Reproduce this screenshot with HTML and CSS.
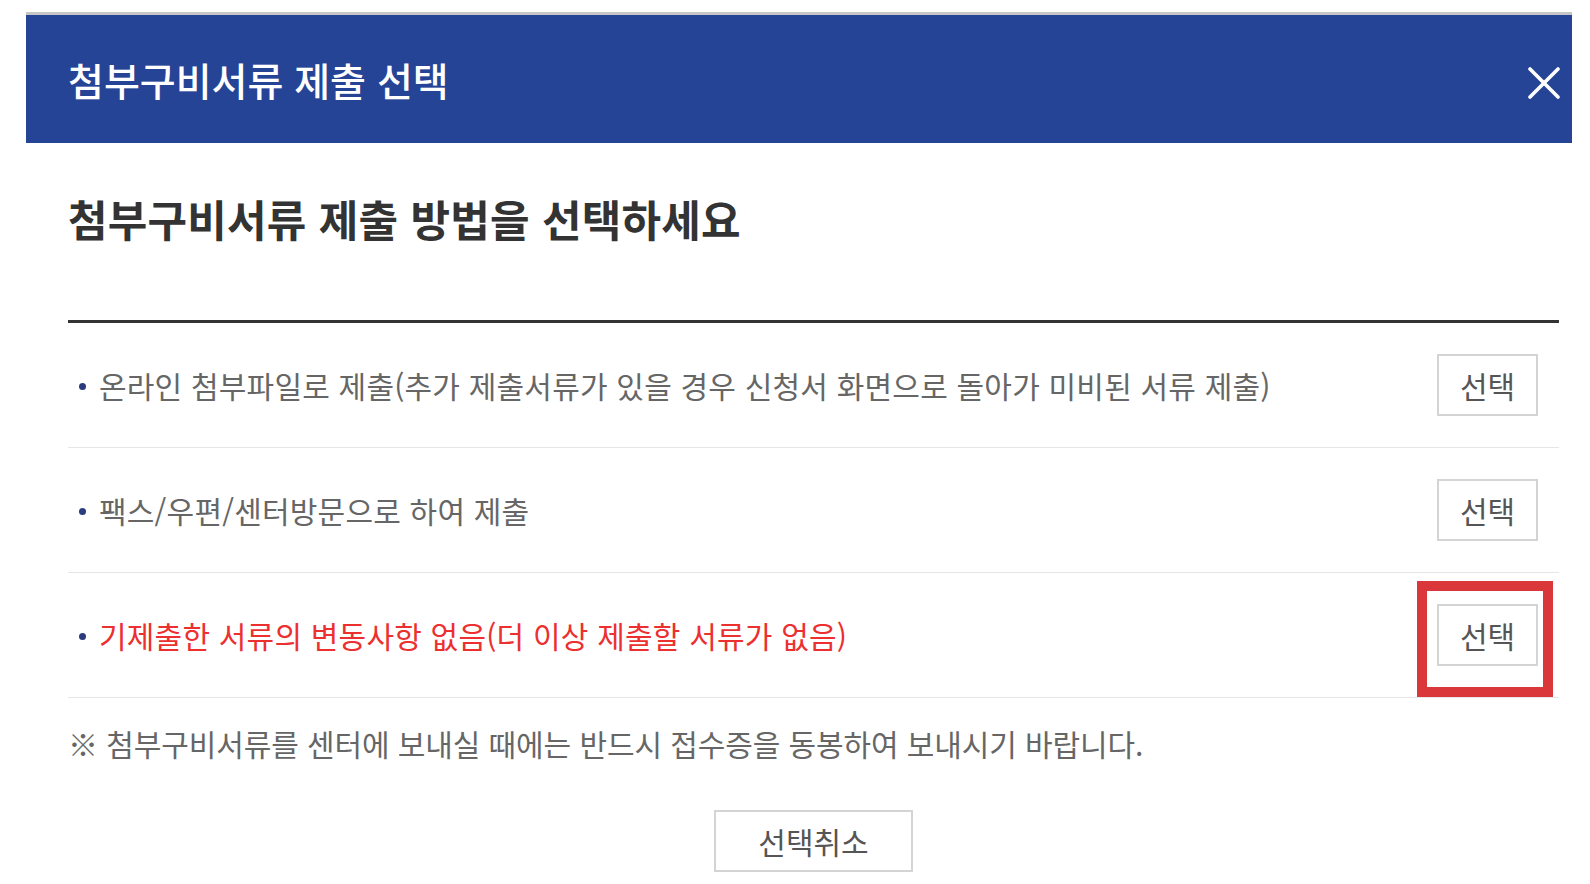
FILE: index.html
```html
<!DOCTYPE html>
<html lang="ko">
<head>
  <meta charset="UTF-8" />
  <meta name="viewport" content="width=device-width, initial-scale=1.0"/>
  <title>첨부구비서류 제출 선택</title>
  <link rel="stylesheet" href="styles.css">
</head>
<body>

  <div class="popup">
    <div class="popup-head">
      <h1>첨부구비서류 제출 선택</h1>
      <button class="close" type="button" aria-label="닫기">
        <svg width="32" height="32" viewBox="0 0 32 32">
          <path d="M2 2 L30 30 M30 2 L2 30" stroke="#fff" stroke-width="3.6" stroke-linecap="round" fill="none"/>
        </svg>
      </button>
    </div>

    <div class="popup-body">
      <h2>첨부구비서류 제출 방법을 선택하세요</h2>

      <ul class="method-list">
        <li class="method">
          <span class="label">온라인 첨부파일로 제출(추가 제출서류가 있을 경우 신청서 화면으로 돌아가 미비된 서류 제출)</span>
          <span class="btn-wrap"><button class="btn" type="button">선택</button></span>
        </li>
        <li class="method">
          <span class="label">팩스/우편/센터방문으로 하여 제출</span>
          <span class="btn-wrap"><button class="btn" type="button">선택</button></span>
        </li>
        <li class="method">
          <span class="label red">기제출한 서류의 변동사항 없음(더 이상 제출할 서류가 없음)</span>
          <span class="btn-wrap marked"><button class="btn" type="button">선택</button></span>
        </li>
      </ul>

      <p class="note">※ 첨부구비서류를 센터에 보내실 때에는 반드시 접수증을 동봉하여 보내시기 바랍니다.</p>

      <div class="actions">
        <button class="btn btn-cancel" type="button">선택취소</button>
      </div>
    </div>
  </div>

</body>
</html>
```

FILE: styles.css
```css
body {
  font-family: 'Noto Sans CJK KR', 'Noto Sans', sans-serif;
  background: #fff;
  margin: 0;
  padding: 12px 0 0 26px;
}

.popup {
  width: 1546px;
}

.popup-head {
  border-top: 3px solid #c6c6c6;
  background: #264496;
  height: 131px;
  display: flex;
  align-items: center;
  justify-content: space-between;
  padding: 0 12px 0 42px;
  box-sizing: border-box;
}

.popup-head h1 {
  margin: 0;
  color: #fff;
  font-size: 39px;
  font-weight: 500;
  line-height: 1;
  letter-spacing: 0;
}

.close {
  background: none;
  border: 0;
  padding: 0;
  width: 32px;
  height: 32px;
  margin-top: 8px;
  cursor: pointer;
}

.close svg {
  display: block;
}

.popup-body {
  padding: 0 13px 0 42px;
}

h2 {
  margin: 45px 0 0 0;
  font-size: 43px;
  font-weight: 700;
  line-height: 60px;
  color: #333;
  letter-spacing: 0.2px;
}

.method-list {
  list-style: none;
  margin: 72px 0 0 0;
  padding: 0;
  border-top: 3px solid #333;
}

.method {
  display: flex;
  align-items: center;
  justify-content: space-between;
  padding: 31px 21px 31px 0;
  border-bottom: 1px solid #e6e6ea;
}

.label {
  position: relative;
  padding-left: 31px;
  font-size: 30px;
  line-height: 40px;
  color: #666;
  letter-spacing: 0.2px;
}

.label::before {
  content: "";
  position: absolute;
  left: 11px;
  top: 18px;
  width: 7px;
  height: 7px;
  border-radius: 50%;
  background: #2a3b7e;
}

.label.red {
  color: #ec2f2f;
}

.btn-wrap {
  position: relative;
  display: block;
}

.btn {
  display: block;
  width: 101px;
  height: 62px;
  background: #fff;
  border: 2px solid #d4d4d4;
  font-family: inherit;
  font-size: 30px;
  color: #555;
  padding: 0;
  cursor: pointer;
}

.btn-wrap.marked::after {
  content: "";
  position: absolute;
  left: -20px;
  top: -23px;
  right: -15px;
  bottom: -31px;
  border: 10px solid #d9373a;
  pointer-events: none;
}

.note {
  margin: 25px 0 0 0;
  font-size: 30px;
  line-height: 40px;
  color: #666;
  letter-spacing: -0.1px;
}

.actions {
  display: flex;
  justify-content: center;
  margin-top: 47px;
}

.btn-cancel {
  width: 199px;
  height: 62px;
  font-size: 30px;
}
```
